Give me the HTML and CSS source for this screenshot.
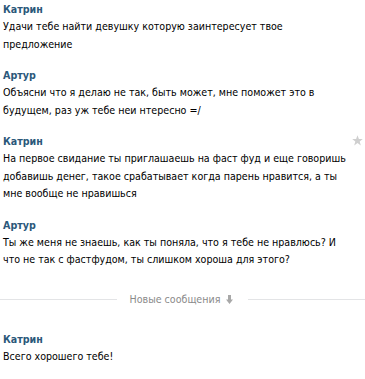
FILE: index.html
```html
<!DOCTYPE html>
<html lang="ru">
<head>
    <meta charset="UTF-8">
    <title>Диалог</title>
    <link rel="stylesheet" href="styles.css">
</head>
<body>
    <div class="history">
        <div class="msg">
            <div class="msg-author">Катрин</div>
            <div class="msg-text">Удачи тебе найти девушку которую заинтересует твое предложение</div>
        </div>
        <div class="msg">
            <div class="msg-author">Артур</div>
            <div class="msg-text">Объясни что я делаю не так, быть может, мне поможет это в будущем, раз уж тебе неи нтересно =/</div>
        </div>
        <div class="msg">
            <div class="msg-author">Катрин</div>
            <div class="msg-text">На первое свидание ты приглашаешь на фаст фуд и еще говоришь добавишь денег, такое срабатывает когда парень нравится, а ты мне вообще не нравишься</div>
            <svg class="msg-star" width="11" height="11" viewBox="0 0 11 11"><path d="M5.5 0.3 L6.9 4 L10.8 4.1 L7.7 6.5 L8.8 10.4 L5.5 8.1 L2.2 10.4 L3.3 6.5 L0.2 4.1 L4.1 4 Z" fill="#cfcfcf"/></svg>
        </div>
        <div class="msg">
            <div class="msg-author">Артур</div>
            <div class="msg-text">Ты же меня не знаешь, как ты поняла, что я тебе не нравлюсь? И что не так с фастфудом, ты слишком хороша для этого?</div>
        </div>

        <div class="new-bar">
            <span class="new-line"></span>
            <span class="new-label">Новые сообщения
                <svg class="new-arrow" width="7" height="9" viewBox="0 0 7 9"><path d="M2 0 H5 V4.5 H7 L3.5 9 L0 4.5 H2 Z" fill="#a8a8a8"/></svg>
            </span>
            <span class="new-line"></span>
        </div>

        <div class="msg">
            <div class="msg-author">Катрин</div>
            <div class="msg-text">Всего хорошего тебе!</div>
        </div>
    </div>
</body>
</html>
```
FILE: styles.css
```css
body {
    margin: 0;
    background-color: #fff;
    font-family: "DejaVu Sans Condensed", "DejaVu Sans", sans-serif;
    font-stretch: condensed;
    font-size: 10.6px;
    color: #000;
}
.history {
    width: 365px;
}
.msg {
    position: relative;
    padding: 0 10px 13px 3px;
}
.msg-author {
    font-weight: bold;
    color: #2b587a;
    line-height: 18px;
}
.msg-text {
    line-height: 17.5px;
}
.msg-star {
    position: absolute;
    top: 3px;
    right: 2px;
}
.new-bar {
    display: flex;
    align-items: center;
    gap: 13px;
    margin: 11px 0 24px;
    height: 13px;
}
.new-line {
    flex: 1;
    height: 1px;
    background-color: #e3e4e6;
}
.new-label {
    color: #8a8a8a;
    white-space: nowrap;
}
.new-arrow {
    margin-left: 3px;
    margin-right: 2px;
    vertical-align: -1px;
}
```
